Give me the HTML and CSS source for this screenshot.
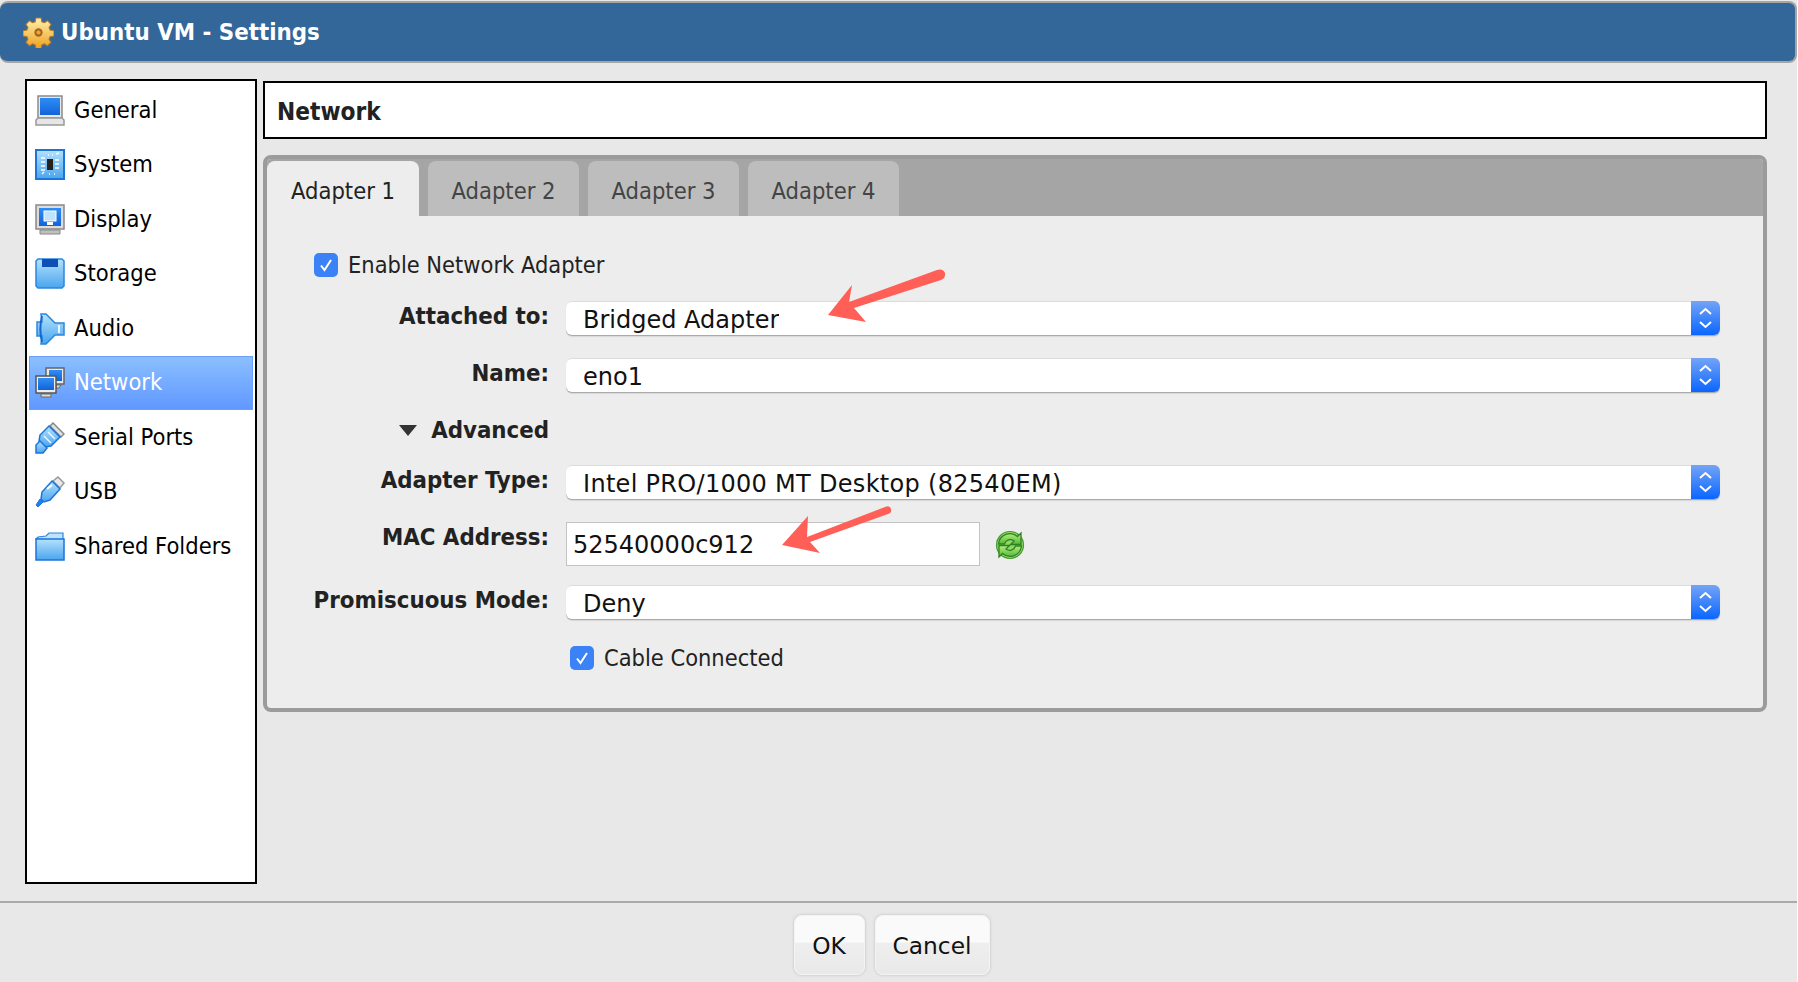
FILE: index.html
```html
<!DOCTYPE html>
<html lang="en">
<head>
<meta charset="utf-8">
<title>Ubuntu VM - Settings</title>
<link rel="stylesheet" href="styles.css">
</head>
<body>
<svg class="defs" width="0" height="0" aria-hidden="true">
  <defs>
    <linearGradient id="blue" x1="0" y1="0" x2="0" y2="1"><stop offset="0" stop-color="#b4e2fc"/><stop offset="1" stop-color="#4aa5ee"/></linearGradient>
    <linearGradient id="deep" x1="0" y1="0" x2="0" y2="1"><stop offset="0" stop-color="#2f8ef5"/><stop offset="1" stop-color="#1263d8"/></linearGradient>
    <linearGradient id="gold" x1="0" y1="0" x2="0" y2="1"><stop offset="0" stop-color="#fff0b0"/><stop offset="1" stop-color="#eda01c"/></linearGradient>
    <linearGradient id="green" x1="0" y1="0" x2="0" y2="1"><stop offset="0" stop-color="#b4ef7c"/><stop offset="1" stop-color="#54b53a"/></linearGradient>
  </defs>
</svg>
<div class="app">
  <header class="titlebar">
    <svg class="gear" viewBox="0 0 30 30"><path fill="url(#gold)" stroke="#b5741f" stroke-width="1" d="M12.500 1h5l.7 3.600 2.500 1 3-2 3.500 3.500-2 3 1 2.500 3.800.700v5l-3.800.700-1 2.500 2 3-3.500 3.500-3-2-2.500 1-.7 3.500h-5l-.7-3.500-2.500-1-3 2-3.500-3.500 2-3-1-2.500-3.800-.700v-5l3.800-.700 1-2.500-2-3 3.500-3.500 3 2 2.500-1z"/><circle cx="15" cy="15" r="4" fill="#a8651a"/><circle cx="15" cy="15" r="2" fill="#e8a63a"/></svg>
    <span class="title-text">Ubuntu VM - Settings</span>
  </header>

  <main class="main">
    <nav class="sidebar">
      <a class="nav-item"><svg class="icon" viewBox="0 0 30 32"><rect x="3" y="1" width="24" height="22" fill="#e8e8e8" stroke="#8a8a8a" stroke-width="1.500"/><rect x="5" y="3" width="20" height="17" fill="url(#deep)"/><path d="M3 23h24l2 2v5H1v-5z" fill="#e6e6e6" stroke="#999" stroke-width="1.500"/></svg><span>General</span></a>
      <a class="nav-item"><svg class="icon" viewBox="0 0 30 32"><rect x="1" y="1" width="28" height="29" fill="url(#blue)" stroke="#1c74dc" stroke-width="2"/><rect x="12" y="10" width="6" height="11" fill="#222"/><path d="M6 9h4M6 13h4M6 17h4M6 21h4M20 11h4M20 15h4M20 19h4M13 6h1M17 6h1M14 25h1M19 25h1M21 5l3-1M7 25l2-2" stroke="#fff" stroke-width="1.500"/></svg><span>System</span></a>
      <a class="nav-item"><svg class="icon" viewBox="0 0 30 32"><rect x="1" y="1" width="28" height="24" fill="#dcdcdc" stroke="#888" stroke-width="1.500"/><rect x="4" y="4" width="22" height="18" fill="url(#deep)"/><rect x="9" y="7" width="12" height="10" fill="#bfe3fb" stroke="#fff"/><path d="M12 18h6v3h-6z" fill="#fff"/><path d="M5 26h20v4H5z" fill="#c0c0c0" stroke="#888"/></svg><span>Display</span></a>
      <a class="nav-item"><svg class="icon" viewBox="0 0 30 32"><path d="M3 1h24l2 2v25l-2 2H3l-2-2V3z" fill="url(#blue)" stroke="#2a86e0" stroke-width="1.500"/><path d="M7 1h16v8H7z" fill="#0d4fb5"/></svg><span>Storage</span></a>
      <a class="nav-item"><svg class="icon" viewBox="0 0 30 32"><path d="M6 1h5l9 9h9v12h-9l-9 9H6l1-8H2V9h5z" fill="url(#blue)" stroke="#2a86e0" stroke-width="1.500"/><path d="M7 3c-2 8-2 18 0 26" fill="none" stroke="#1568d0" stroke-width="2"/><path d="M24 12v8" stroke="#e8f6ff" stroke-width="2"/></svg><span>Audio</span></a>
      <a class="nav-item active"><svg class="icon" viewBox="0 0 30 32"><rect x="11" y="1" width="18" height="16" fill="#e8e8e8" stroke="#666" stroke-width="1.500"/><rect x="14" y="3" width="13" height="11" fill="url(#deep)"/><path d="M21 18h5l-2 3h-3z" fill="#ddd" stroke="#666"/><rect x="1" y="9" width="20" height="17" fill="#eee" stroke="#555" stroke-width="1.500"/><rect x="3" y="11" width="16" height="12" fill="url(#deep)"/><path d="M6 27h10v3H6z" fill="#ddd" stroke="#666"/></svg><span>Network</span></a>
      <a class="nav-item"><svg class="icon" viewBox="0 0 30 32"><path d="M18 1l11 11-3 3L15 4z" fill="#e2e2e2" stroke="#888" stroke-width="1.500"/><path d="M14 4l11 11-9 9-6 1-6-6 1-6z" fill="url(#blue)" stroke="#1c74dc" stroke-width="1.500"/><path d="M5 19l7 7-4 5H1v-8z" fill="url(#blue)" stroke="#1c74dc" stroke-width="1.500"/><path d="M13 10l7 7M9 14l7 7" stroke="#e8f6ff" stroke-width="1.500"/></svg><span>Serial Ports</span></a>
      <a class="nav-item"><svg class="icon" viewBox="0 0 30 32"><path d="M23 1l6 6-4 5-7-7z" fill="#e8e8e8" stroke="#999" stroke-width="1.500"/><path d="M17 5l8 8-10 11-6 2-3-3 1-7z" fill="url(#blue)" stroke="#1c74dc" stroke-width="1.500"/><path d="M5 23l3 3-5 5-2-2z" fill="#1f7ff0" stroke="#1c74dc"/><path d="M12 13l5-4" stroke="#fff" stroke-width="2"/></svg><span>USB</span></a>
      <a class="nav-item"><svg class="icon" viewBox="0 0 30 32"><path d="M1 8l2-2 8-1 3-3h14v7z" fill="#bfe3fb" stroke="#2a86e0" stroke-width="1.200"/><path d="M1 8h28v21H1z" fill="url(#blue)" stroke="#1c74dc" stroke-width="1.500"/></svg><span>Shared Folders</span></a>
    </nav>

    <section class="content">
      <h1 class="page-head">Network</h1>
      <div class="panel">
        <div class="tabbar">
          <div class="tab active">Adapter 1</div>
          <div class="tab">Adapter 2</div>
          <div class="tab">Adapter 3</div>
          <div class="tab">Adapter 4</div>
        </div>
        <div class="form">
          <div class="check-row wide"><span class="check"><svg viewBox="0 0 24 24"><path d="M7 12.500l3.500 4.500L17 7" fill="none" stroke="#fff" stroke-width="2"/></svg></span><span>Enable Network Adapter</span></div>

          <label class="lbl">Attached to:</label>
          <div class="select"><span class="val">Bridged Adapter</span><span class="spin"><svg viewBox="0 0 29 34"><path d="M9 13l5.500-5 5.500 5M9 21l5.500 5 5.500-5" fill="none" stroke="#fff" stroke-width="2"/></svg></span></div>

          <label class="lbl">Name:</label>
          <div class="select"><span class="val">eno1</span><span class="spin"><svg viewBox="0 0 29 34"><path d="M9 13l5.500-5 5.500 5M9 21l5.500 5 5.500-5" fill="none" stroke="#fff" stroke-width="2"/></svg></span></div>

          <div class="lbl adv"><span class="tri"></span>Advanced</div>
          <div></div>

          <label class="lbl">Adapter Type:</label>
          <div class="select"><span class="val long">Intel PRO/1000 MT Desktop (82540EM)</span><span class="spin"><svg viewBox="0 0 29 34"><path d="M9 13l5.500-5 5.500 5M9 21l5.500 5 5.500-5" fill="none" stroke="#fff" stroke-width="2"/></svg></span></div>

          <label class="lbl mac-lbl">MAC Address:</label>
          <div class="mac-row">
            <div class="mac">52540000c912</div>
            <svg class="refresh" viewBox="0 0 30 30"><circle cx="15" cy="15" r="13.500" fill="#8fd864" stroke="#4a9a34" stroke-width="1.200"/><path d="M3.500 14A11.500 11.500 0 0 1 22.500 6.500L26 3v11.500H15.500L19 11A6 6 0 0 0 9.500 14z" fill="url(#green)" stroke="#2f8222" stroke-width="1.300"/><path d="M26.500 16A11.500 11.500 0 0 1 7.500 23.500L4 27V15.500H14.500L11 19A6 6 0 0 0 20.500 16z" fill="url(#green)" stroke="#2f8222" stroke-width="1.300"/></svg>
          </div>

          <label class="lbl">Promiscuous Mode:</label>
          <div class="select"><span class="val">Deny</span><span class="spin"><svg viewBox="0 0 29 34"><path d="M9 13l5.500-5 5.500 5M9 21l5.500 5 5.500-5" fill="none" stroke="#fff" stroke-width="2"/></svg></span></div>

          <div></div>
          <div class="check-row cable"><span class="check"><svg viewBox="0 0 24 24"><path d="M7 12.500l3.500 4.500L17 7" fill="none" stroke="#fff" stroke-width="2"/></svg></span><span>Cable Connected</span></div>
        </div>
      </div>
    </section>
  </main>

  <footer class="footer">
    <button class="btn ok">OK</button>
    <button class="btn cancel">Cancel</button>
  </footer>
</div>
<svg class="arrow" viewBox="0 0 1798 982" aria-hidden="true">
  <path d="M828 315L852 285 849 302 937 270Q943 268 945 273 946 278 941 280L854 308 866 322z" fill="#ff5f57"/>
  <path d="M782 545L808 516 807 537 885 507Q890 505 891 509 892 513 888 514L810 542 820 553z" fill="#ff5f57"/>
</svg>
</body>
</html>
```
FILE: styles.css
```css
* { box-sizing: border-box; }
html { background: #fff; }
body {
  margin: 0;
  width: 1797px;
  height: 982px;
  overflow: hidden;
  background: #e8e8e8;
  font-family: "DejaVu Sans Condensed", "DejaVu Sans", sans-serif;
  position: relative;
}
.defs { position: absolute; }
.app { display: flex; flex-direction: column; height: 982px; padding-top: 1px; }

.titlebar {
  height: 62px;
  display: flex;
  align-items: center;
  gap: 7px;
  padding: 0 0 0 23px;
  background: #336699;
  border: solid #a5a5a5;
  border-width: 2px 2px 2px 0;
  border-radius: 8px;
  color: #fff;
  font-weight: 700;
  font-size: 23.800px;
}
.gear { width: 31px; height: 31px; filter: blur(.5px); flex: none; }

.main {
  flex: 1;
  display: flex;
  gap: 6px;
  padding: 16px 0 17px 25px;
  min-height: 0;
}
.sidebar {
  width: 232px;
  height: 805px;
  background: #fff;
  border: 2px solid #000;
  padding: 2.500px 2px;
}
.nav-item {
  display: flex;
  align-items: center;
  gap: 9px;
  height: 54.500px;
  padding-left: 6px;
  color: #000;
  font-size: 23.500px;
}
.nav-item span { margin-top: -2px; }
.nav-item.active {
  height: 54px;
  margin-bottom: .5px;
  color: #fff;
  background: linear-gradient(#8abfff, #6198ff);
  border: 1px solid #6b9eff;
  padding-left: 5px;
}
.icon { width: 30px; height: 32px; flex: none; filter: blur(.5px); }

.content { width: 1504px; padding-top: 2px; display: flex; flex-direction: column; gap: 16px; }
.page-head {
  margin: 0;
  height: 58px;
  display: flex;
  align-items: center;
  padding: 4px 0 0 12px;
  background: #fff;
  border: 2px solid #000;
  color: #222;
  font-size: 24.200px;
  font-weight: 700;
}
.panel {
  height: 557px;
  background: #ededed;
  border: 4px solid #9b9b9b;
  border-radius: 8px;
  overflow: hidden;
}
.tabbar {
  height: 57px;
  padding-top: 2px;
  background: #a5a5a5;
  display: flex;
  gap: 9px;
}
.tab {
  width: 151px;
  display: flex;
  align-items: center;
  justify-content: center;
  padding-top: 4px;
  background: #bdbdbd;
  border-radius: 8px 8px 0 0;
  color: #444;
  font-size: 23.500px;
}
.tab.active { width: 152px; background: #ededed; color: #222; }

.form {
  display: grid;
  grid-template-columns: 282px 1154px;
  column-gap: 17px;
  grid-template-rows: 48px 57px 57px 50px 57px 63px 61px 24px;
  padding-top: 37px;
  color: #222;
  font-size: 23.400px;
}
.lbl {
  text-align: right;
  font-weight: 700;
  font-size: 23.750px;
  line-height: 30px;
  white-space: nowrap;
}
.adv { display: flex; justify-content: flex-end; align-items: center; gap: 14px; align-self: start; margin-top: 0; }
.tri { width: 0; height: 0; border: 9px solid transparent; border-top: 11px solid #333; border-bottom: 0; }
.check-row { display: flex; align-items: center; gap: 10px; height: 24px; }
.check-row.wide { grid-column: 1 / 3; padding-left: 47px; }
.check-row.cable { padding-left: 4px; }
.check { width: 24px; height: 24px; border-radius: 5px; background: #3b82f6; flex: none; display: flex; }
.check svg { width: 24px; height: 24px; }

.select {
  height: 34px;
  display: flex;
  justify-content: space-between;
  background: #fff;
  border-radius: 6px;
  border-top: 1px solid #dcdcdc;
  box-shadow: 0 1px 0 #aaa, 0 2px 1px #d8d8d8;
  font-family: "DejaVu Sans", sans-serif;
  color: #111;
}
.val { padding-left: 17px; font-size: 24px; line-height: 37px; height: 33px; overflow: hidden; white-space: nowrap; }
.val.long { letter-spacing: .3px; }
.spin {
  width: 29px;
  height: 34px;
  margin-top: -1px;
  border-radius: 0 6px 6px 0;
  background: linear-gradient(#74a4f6, #0a66ff);
  flex: none;
}
.spin svg { width: 29px; height: 34px; display: block; }

.mac-row { display: flex; align-items: flex-start; gap: 15px; }
.mac {
  width: 414px;
  height: 44px;
  background: #fff;
  border: 1px solid #c4c4c4;
  padding-left: 6px;
  font-family: "DejaVu Sans", sans-serif;
  font-size: 24px;
  line-height: 44px;
  color: #111;
}
.refresh { width: 30px; height: 30px; margin-top: 8px; filter: blur(.5px); }

.footer {
  height: 81px;
  border-top: 2px solid #aaa;
  padding: 12px 14px 0 0;
  display: flex;
  justify-content: center;
  align-items: flex-start;
  gap: 10px;
}
.btn {
  height: 60px;
  border: 1px solid #f4f4f4;
  border-radius: 8px;
  background: linear-gradient(#fafafa 0, #fafafa 45%, #eeeeee 47%, #e9e9e9 100%);
  box-shadow: 0 0 3px #bbb;
  font-family: "DejaVu Sans", sans-serif;
  font-size: 23.300px;
  color: #111;
  padding: 0;
}
.ok { width: 71px; }
.cancel { width: 115px; }

.arrow { position: absolute; left: 0; top: 0; width: 1798px; height: 982px; pointer-events: none; }
```
